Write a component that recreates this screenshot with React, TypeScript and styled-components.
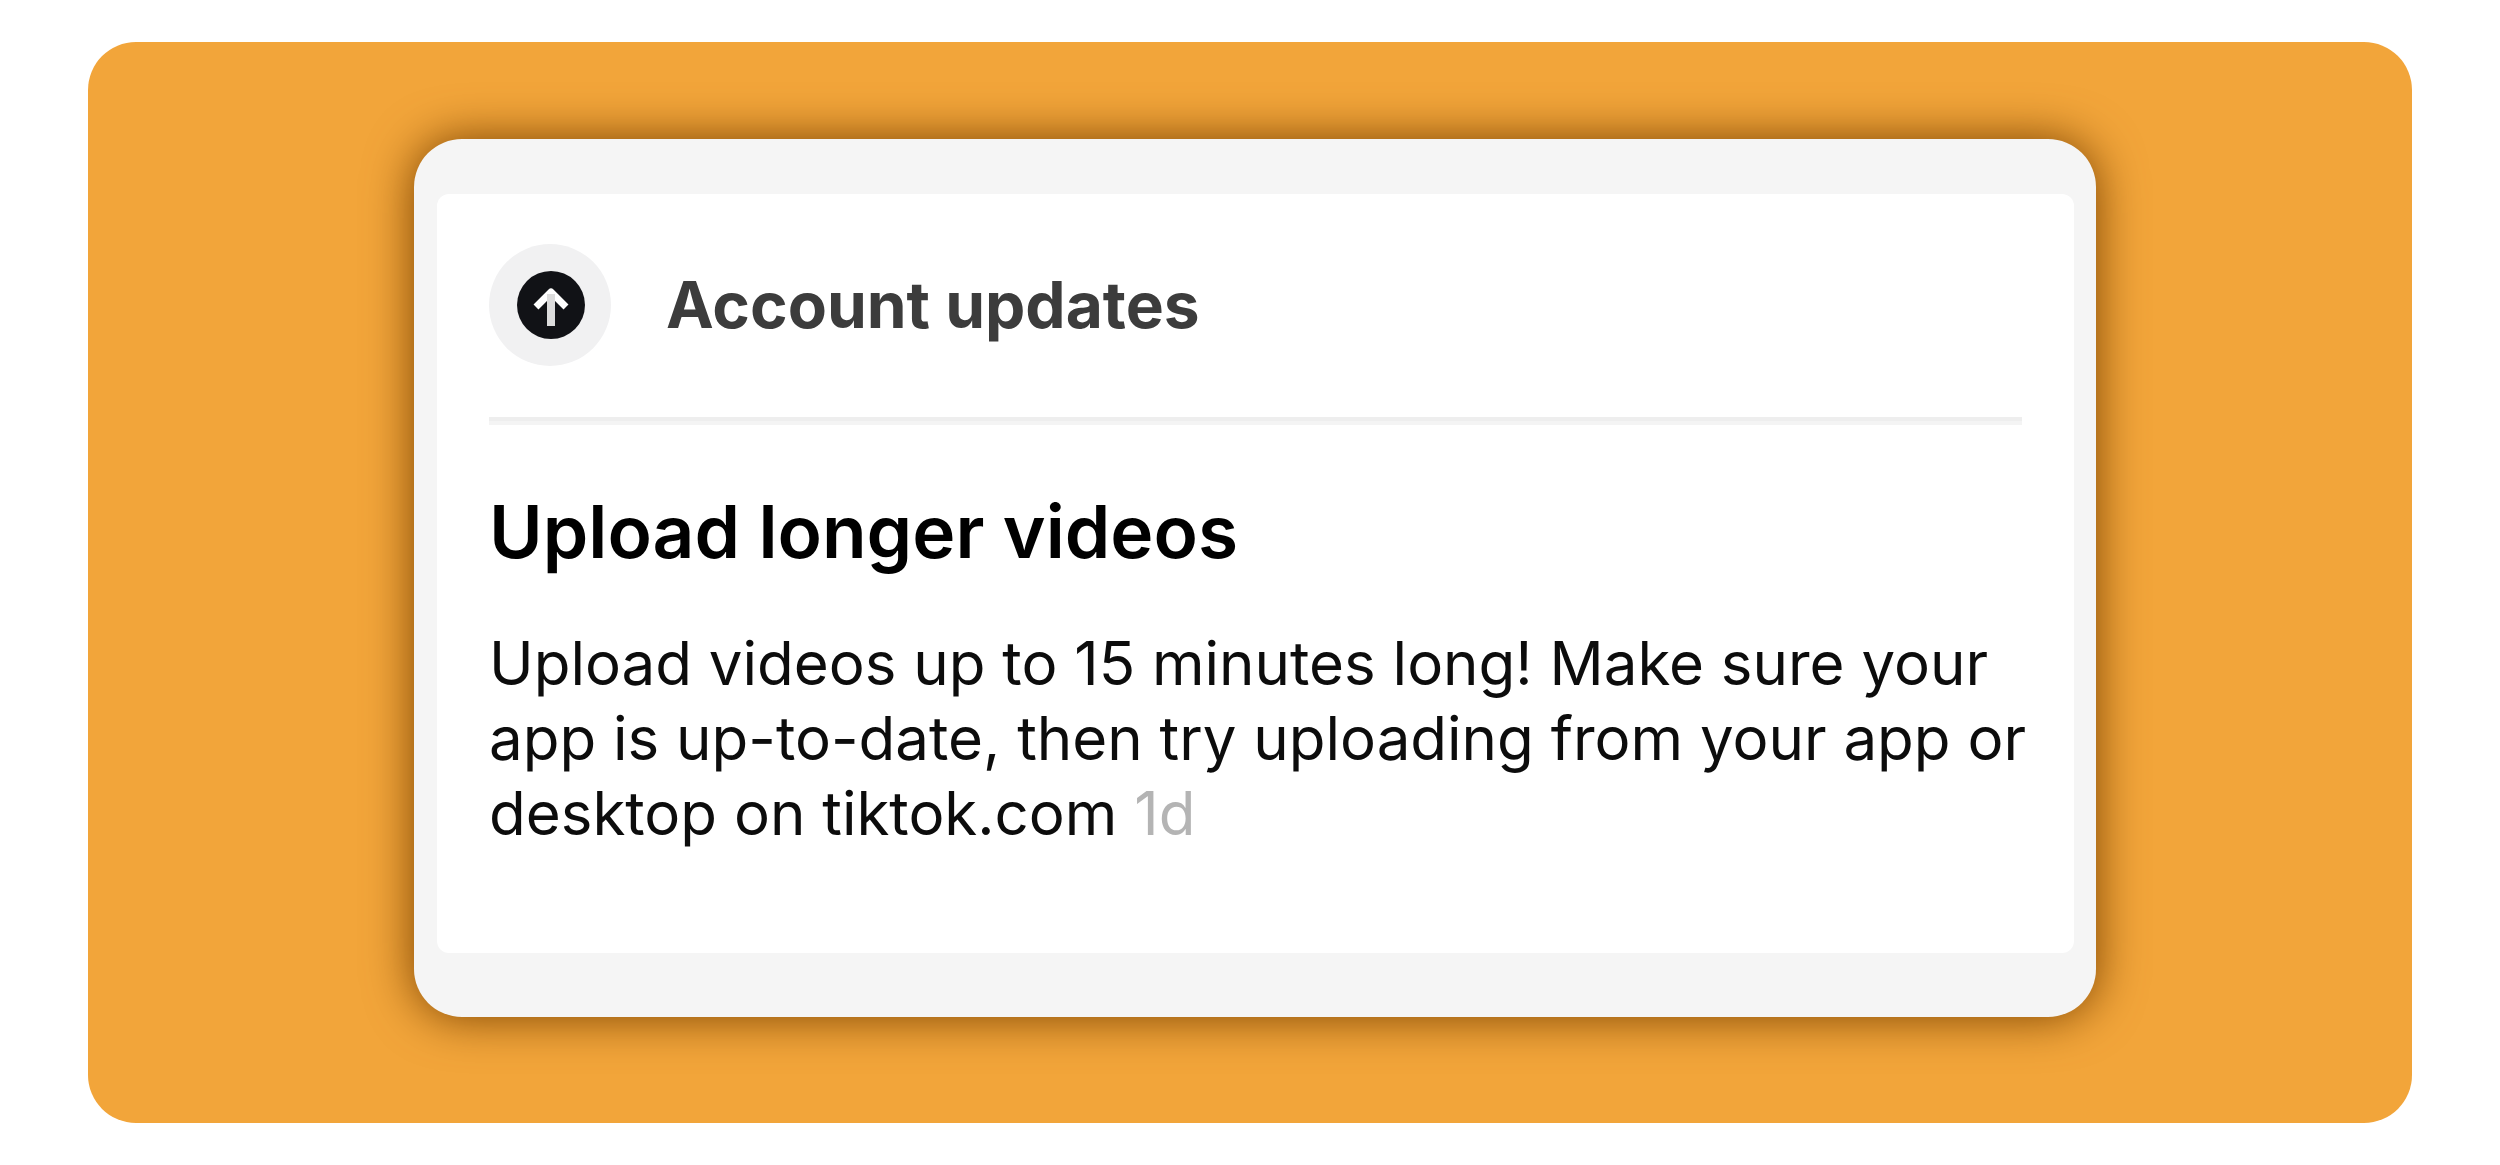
import React from "react";
import styled, { createGlobalStyle } from "styled-components";

const GlobalStyle = createGlobalStyle`
  *, *::before, *::after { box-sizing: border-box; }
  body {
    margin: 0;
    background: #ffffff;
    font-family: Inter, "Liberation Sans", sans-serif;
  }
`;

const Page = styled.main`
  padding: 42px 88px;
`;

const Backdrop = styled.div`
  padding: 97px 316px 106px 326px;
  border-radius: 48px;
  background: #f2a53a;
`;

const Card = styled.article`
  padding: 55px 22px 64px 23px;
  border-radius: 48px;
  background: #f5f5f5;
  box-shadow: 0 0 48px #7a4202;
`;

const Sheet = styled.div`
  padding: 50px 40px 102px 52px;
  border-radius: 12px;
  background: #ffffff;
`;

const Header = styled.header`
  display: flex;
  align-items: center;
  gap: 55px;
`;

const Badge = styled.span`
  display: flex;
  flex: none;
  align-items: center;
  justify-content: center;
  width: 122px;
  height: 122px;
  border-radius: 50%;
  background: #f1f1f2;
`;

const Category = styled.h2`
  margin: 0;
  color: #3c3c3c;
  font-size: 64px;
  font-weight: 700;
  line-height: 80px;
`;

const Divider = styled.hr`
  height: 8px;
  margin: 51px 12px 63px 0;
  border: 0;
  border-bottom: 4px solid #f4f4f4;
  background: #eeeeee;
`;

const Title = styled.h1`
  margin: 0 0 50px;
  color: #000000;
  font-size: 73px;
  font-weight: 600;
  line-height: 88px;
`;

const Message = styled.p`
  margin: 0;
  color: #0c0c0c;
  font-size: 60px;
  font-weight: 400;
  line-height: 75px;
`;

const Age = styled.time`
  color: #b4b4b4;
`;

function UploadIcon() {
  return (
    <svg width="70" height="70" viewBox="0 0 70 70" fill="none" aria-hidden="true">
      <circle cx="36" cy="35" r="34" fill="#111216" />
      <path d="M21 37 L36 22 L51 37" stroke="#ffffff" strokeWidth="7" strokeLinejoin="round" />
      <path d="M36 24 V56" stroke="#dcdcdc" strokeWidth="8" />
    </svg>
  );
}

export default function App() {
  return (
    <>
      <GlobalStyle />
      <Page>
        <Backdrop>
          <Card>
            <Sheet>
              <Header>
                <Badge>
                  <UploadIcon />
                </Badge>
                <Category>Account updates</Category>
              </Header>
              <Divider />
              <Title>Upload longer videos</Title>
              <Message>
                Upload videos up to 15 minutes long! Make sure your app is up-to-date, then try
                uploading from your app or desktop on tiktok.com <Age dateTime="P1D">1d</Age>
              </Message>
            </Sheet>
          </Card>
        </Backdrop>
      </Page>
    </>
  );
}
